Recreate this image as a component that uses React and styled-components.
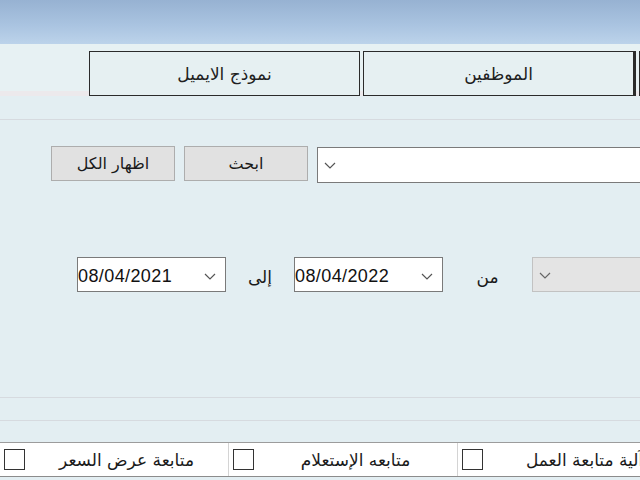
import React from "react";
import styled, { createGlobalStyle } from "styled-components";

const Global = createGlobalStyle`
  html, body { margin: 0; padding: 0; background: #e3eef2; overflow: hidden; }
  * { box-sizing: border-box; }
`;

const arabic = `"DejaVu Sans", "Noto Sans", sans-serif`;

const Window = styled.div`
  width: 640px;
  height: 480px;
  display: flex;
  flex-direction: column;
  overflow: hidden;
  background: #e3eef2;
  font-family: ${arabic};
  color: #1c1c1c;
`;

const Header = styled.div`
  height: 44px;
  flex: none;
  background: linear-gradient(to bottom, #97b2d2 0%, #a9c3e0 55%, #bcd3ea 100%);
`;

const TabBar = styled.div`
  height: 76px;
  flex: none;
  padding: 7px 0 0 89px;
  display: flex;
  align-items: flex-start;
  gap: 3px;
  background: linear-gradient(
    to bottom,
    #e7f1f3 0,
    #e7f1f3 47px,
    #ece9ec 47px,
    #ece9ec 52px,
    #e3eef2 52px
  );
  border-bottom: 1px solid #d6dadf;
`;

const Tab = styled.div`
  flex: none;
  width: ${(p) => p.$w}px;
  height: 45px;
  border: 1px solid #2b2b2b;
  border-right-width: ${(p) => (p.$thick ? 3 : 1)}px;
  background: #e6f0f2;
  display: flex;
  align-items: center;
  justify-content: center;
  direction: rtl;
  font-size: 17px;
  color: #202020;
`;

const FormArea = styled.div`
  height: 278px;
  flex: none;
  display: flex;
  flex-direction: column;
  border-bottom: 1px solid #d6dadf;
`;

const SearchRow = styled.div`
  margin-top: 26px;
  padding-left: 51px;
  display: flex;
  align-items: flex-start;
  gap: 9px;
  height: 37px;
`;

const Button = styled.div`
  flex: none;
  width: 124px;
  height: 35px;
  background: #e1e1e1;
  border: 1px solid #adadad;
  display: flex;
  align-items: center;
  justify-content: center;
  direction: rtl;
  font-size: 16px;
  color: #1a1a1a;
`;

const Combo = styled.div`
  flex: none;
  width: ${(p) => p.$w}px;
  height: ${(p) => p.$h}px;
  margin-top: ${(p) => p.$mt || 0}px;
  background: ${(p) => (p.$disabled ? "#e4e4e4" : "#ffffff")};
  border: 1px solid ${(p) => (p.$disabled ? "#c2c2c2" : "#7a7a7a")};
  display: flex;
  align-items: center;
  padding-left: 5px;
`;

const DateRow = styled.div`
  margin-top: 74px;
  padding-left: 77px;
  display: flex;
  align-items: center;
  height: 35px;
`;

const DatePicker = styled.div`
  flex: none;
  width: 149px;
  height: 35px;
  background: #ffffff;
  border: 1px solid #7a7a7a;
  display: flex;
  align-items: center;
  justify-content: space-between;
  padding: 3px 8px 0 0;
  font-family: "Liberation Sans", Arial, sans-serif;
  font-size: 18px;
  letter-spacing: 0.4px;
  color: #111;
`;

const Label = styled.div`
  flex: none;
  width: ${(p) => p.$w}px;
  text-align: center;
  direction: rtl;
  font-size: 17px;
  color: #1a1a1a;
  padding-top: 4px;
`;

const Band = styled.div`
  height: ${(p) => p.$h}px;
  flex: none;
  border-bottom: 1px solid ${(p) => (p.$dark ? "#9c9c9c" : "#d6dadf")};
`;

const CheckRow = styled.div`
  height: 34px;
  flex: none;
  background: #ffffff;
  border-bottom: 1px solid #8c8c8c;
  display: flex;
`;

const CheckCell = styled.div`
  flex: none;
  width: ${(p) => p.$w}px;
  display: flex;
  align-items: center;
  padding-left: 4px;
  border-right: 1px solid #d4d4d4;
  white-space: nowrap;
`;

const Box = styled.div`
  flex: none;
  width: 21px;
  height: 21px;
  border: 1px solid #333333;
  background: #fff;
`;

const CheckLabel = styled.div`
  flex: 1;
  text-align: center;
  direction: rtl;
  font-size: 17px;
  color: #1a1a1a;
  white-space: nowrap;
`;

const Chevron = ({ color = "#555" }) => (
  <svg width="14" height="10" viewBox="0 0 14 10">
    <path d="M2 3 L7 8 L12 3" fill="none" stroke={color} strokeWidth="1.2" />
  </svg>
);

export default function App() {
  return (
    <>
      <Global />
      <Window>
        <Header />
        <TabBar>
          <Tab $w={271}>نموذج الايميل</Tab>
          <Tab $w={273} $thick>الموظفين</Tab>
          <Tab $w={271} />
        </TabBar>
        <FormArea>
          <SearchRow>
            <Button>اظهار الكل</Button>
            <Button>ابحث</Button>
            <Combo $w={400} $h={36} $mt={1}>
              <Chevron />
            </Combo>
          </SearchRow>
          <DateRow>
            <DatePicker>
              <span>08/04/2021</span>
              <Chevron />
            </DatePicker>
            <Label $w={68}>إلى</Label>
            <DatePicker>
              <span>08/04/2022</span>
              <Chevron />
            </DatePicker>
            <Label $w={89}>من</Label>
            <Combo $w={200} $h={35} $disabled>
              <Chevron color="#666" />
            </Combo>
          </DateRow>
        </FormArea>
        <Band $h={23} />
        <Band $h={22} $dark />
        <CheckRow>
          <CheckCell $w={229}>
            <Box />
            <CheckLabel>متابعة عرض السعر</CheckLabel>
          </CheckCell>
          <CheckCell $w={229}>
            <Box />
            <CheckLabel>متابعه الإستعلام</CheckLabel>
          </CheckCell>
          <CheckCell $w={229}>
            <Box />
            <CheckLabel>آلية متابعة العمل</CheckLabel>
          </CheckCell>
        </CheckRow>
      </Window>
    </>
  );
}
